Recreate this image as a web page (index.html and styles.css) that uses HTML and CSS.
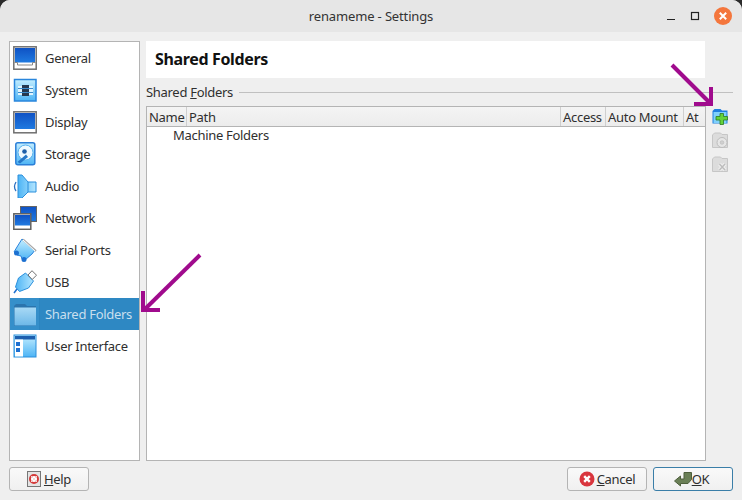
FILE: index.html
```html
<!doctype html>
<html>
<head>
    <meta charset="utf-8">
    <title>renameme - Settings</title>
    <link rel="stylesheet" href="styles.css">
</head>
<body>
<div class="window">
    <svg class="defs" width="0" height="0">
        <defs>
            <linearGradient id="screen" x1="0" y1="0" x2="0" y2="1"><stop offset="0" stop-color="#0f52c4"/><stop offset="1" stop-color="#1f7ae0"/></linearGradient>
            <linearGradient id="sky" x1="0" y1="0" x2="0" y2="1"><stop offset="0" stop-color="#c4eeff"/><stop offset="1" stop-color="#4db4f5"/></linearGradient>
            <linearGradient id="skyside" x1="0" y1="0" x2="1" y2="0"><stop offset="0" stop-color="#4db4f5"/><stop offset="1" stop-color="#b4e6ff"/></linearGradient>
            <linearGradient id="folder" x1="0" y1="0" x2="0" y2="1"><stop offset="0" stop-color="#a8d9f5"/><stop offset="1" stop-color="#6db8e8"/></linearGradient>
        </defs>
    </svg>
    <div class="titlebar">
        <span class="title">renameme - Settings</span>
        <div class="winbtns">
            <svg class="winbtn" width="10" height="10" viewBox="0 0 10 10"><path d="M1 8.500h8" stroke="#222" stroke-width="1"/></svg>
            <svg class="winbtn" width="10" height="10" viewBox="0 0 10 10"><rect x="1.500" y="1.500" width="7" height="7" fill="none" stroke="#222" stroke-width="1.200"/></svg>
            <svg class="closebtn" width="18" height="18" viewBox="0 0 18 18"><circle cx="9" cy="9" r="9" fill="#f4763c"/><path d="M5.800 5.800l6.400 6.400M12.200 5.800l-6.400 6.400" stroke="#fff" stroke-width="2"/></svg>
        </div>
    </div>
    <div class="main">
        <ul class="sidebar">
            <li class="item">
                <svg class="ico" viewBox="0 0 24 24"><rect x=".8" y=".8" width="22.400" height="22.400" fill="#fff" stroke="#707070" stroke-width="1.500"/><rect x="2" y="2" width="20" height="14.500" fill="url(#screen)"/><path d="M1.500 16.500h3v2.500h15v-2.500h3" fill="none" stroke="#888"/></svg>
                <span>General</span>
            </li>
            <li class="item">
                <svg class="ico" viewBox="0 0 24 24"><rect x="1.500" y="1.500" width="21.500" height="21.500" fill="url(#sky)" stroke="#2a86dc" stroke-width="1.500"/><rect x="5" y="8" width="15" height="9" fill="#dff4ff"/><rect x="9" y="7" width="7" height="11" fill="#26384f"/><path d="M5 10.500h15M5 14.500h15" stroke="#3c8ccc"/></svg>
                <span>System</span>
            </li>
            <li class="item">
                <svg class="ico" viewBox="0 0 24 24"><rect x=".8" y="1.800" width="22.400" height="21" fill="#fff" stroke="#707070" stroke-width="1.500"/><rect x="2" y="3" width="20" height="16" fill="url(#screen)"/></svg>
                <span>Display</span>
            </li>
            <li class="item">
                <svg class="ico" viewBox="0 0 24 24"><rect x="2.800" y=".8" width="19" height="22" rx="2" fill="url(#sky)" stroke="#2a7fd8" stroke-width="1.500"/><circle cx="12.500" cy="10.500" r="7.500" fill="#eef9ff" stroke="#55b0ee"/><circle cx="11.500" cy="9.500" r="2.300" fill="#1d5ea8"/><path d="M4.500 20l8.500-7.500 2 2.500-8 6.500z" fill="#2577c8"/></svg>
                <span>Storage</span>
            </li>
            <li class="item">
                <svg class="ico" viewBox="0 0 24 24"><path d="M5 1h4l6 7h8v10h-8l-6 6H5z" fill="url(#skyside)" stroke="#2a8fdc"/><path d="M15 8v10" stroke="#2a8fdc"/><path d="M3 8q-3 5 0 9" fill="none" stroke="#2a6fc0" stroke-width="1.300"/></svg>
                <span>Audio</span>
            </li>
            <li class="item">
                <svg class="ico" viewBox="0 0 24 24"><rect x="7.500" y=".5" width="16" height="15" fill="url(#screen)" stroke="#666"/><rect x=".8" y="7.800" width="17" height="15.500" fill="#fff" stroke="#606060" stroke-width="1.500"/><rect x="2" y="9" width="15" height="10.500" fill="url(#screen)"/></svg>
                <span>Network</span>
            </li>
            <li class="item">
                <svg class="ico" viewBox="0 0 24 24"><path d="M9 1l13 11-3 4-7 6-3-1-1-3-4-1-3-3 3-5z" fill="url(#sky)" stroke="#2a82dc"/><path d="M10 1.500l13 11.500" stroke="#a8a8a8" stroke-width="2"/><path d="M10 2l12 11" stroke="#fff"/><circle cx="3.500" cy="15" r="2.500" fill="#1d70d0"/><circle cx="11" cy="21.500" r="2.500" fill="#1d70d0"/></svg>
                <span>Serial Ports</span>
            </li>
            <li class="item">
                <svg class="ico" viewBox="0 0 24 24"><path d="M2.500 17l3-9 7-5 8 8-5 7-9 3.500z" fill="url(#skyside)" stroke="#2a8fdc"/><path d="M15 5l4-4.300 4.500 4.500-4.300 4.300z" fill="#fff" stroke="#707070"/><path d="M4 19l-3 4" stroke="#1d70d0" stroke-width="1.500"/></svg>
                <span>USB</span>
            </li>
            <li class="item current">
                <svg class="ico" viewBox="0 0 24 24"><path d="M1 4l2-2h9l2 2h9v21H1z" fill="#2b74ad"/><rect x="1.500" y="5.500" width="21.500" height="18" fill="url(#folder)"/></svg>
                <span>Shared Folders</span>
            </li>
            <li class="item">
                <svg class="ico" viewBox="0 0 24 24"><rect x="1" y="1" width="22" height="22" fill="url(#sky)" stroke="#2a8fdc"/><rect x="2" y="2" width="20" height="3.500" fill="#1d5fae"/><rect x="2" y="5.500" width="8" height="17" fill="#fff"/><rect x="3" y="8" width="4" height="4" fill="#1d70d0"/><rect x="3" y="14" width="4" height="4" fill="#1d70d0"/></svg>
                <span>User Interface</span>
            </li>
        </ul>
        <div class="content">
            <h1 class="pagehead">Shared Folders</h1>
            <div class="grouphead"><span>Shared <u>F</u>olders</span><i></i></div>
            <div class="tablerow">
                <div class="table">
                    <div class="thead">
                        <div class="th name">Name</div>
                        <div class="th path">Path</div>
                        <div class="th access">Access</div>
                        <div class="th mount">Auto Mount</div>
                        <div class="th at">At</div>
                    </div>
                    <div class="tr">Machine Folders</div>
                </div>
                <div class="tools">
                    <svg class="tool" viewBox="0 0 16 17"><path d="M.5 3l2-2h6l1.500 1.500h5.500v13H.5z" fill="#1f7fe0"/><rect x="1.500" y="4" width="13" height="11" fill="#7fd0fb"/><path d="M8 5.500h3.500v3h4v3.500h-4v4.500H8V12H4V8.500h4z" fill="#63d33a" stroke="#2c7a20" stroke-width=".8"/></svg>
                    <svg class="tool" viewBox="0 0 16 17"><path d="M.5 3l2-2h6l1.500 1.500h5.500v13H.5z" fill="#dcdcdc" stroke="#c6c6c6"/><circle cx="10" cy="10.500" r="5" fill="#e6e6e6" stroke="#bcbcbc"/><circle cx="10" cy="10.500" r="1.800" fill="#d0d0d0" stroke="#b8b8b8" stroke-width=".6"/></svg>
                    <svg class="tool" viewBox="0 0 16 17"><path d="M.5 3l2-2h6l1.500 1.500h5.500v13H.5z" fill="#dcdcdc" stroke="#c6c6c6"/><path d="M7.500 8l5.500 6M13 8l-5.500 6" stroke="#eee" stroke-width="3.600"/><path d="M7.500 8l5.500 6M13 8l-5.500 6" stroke="#bcbcbc" stroke-width="1.400"/></svg>
                </div>
            </div>
        </div>
    </div>
    <div class="footer">
        <button class="btn">
            <svg class="btnico helpico" viewBox="0 0 14 16"><rect x=".5" y=".5" width="13" height="15" fill="#e4e4e4" stroke="#777"/><circle cx="7" cy="8" r="4" fill="#fff" stroke="#d43a3a" stroke-width="2"/><path d="M4 5l6 6M10 5l-6 6" stroke="#f4dada"/></svg>
            <span><u>H</u>elp</span>
        </button>
        <div class="spacer"></div>
        <button class="btn">
            <svg class="btnico" viewBox="0 0 16 16"><circle cx="8" cy="8" r="7.500" fill="#d9363e"/><path d="M5.200 5.200l5.600 5.600M10.800 5.200l-5.600 5.600" stroke="#fff" stroke-width="2.400"/></svg>
            <span><u>C</u>ancel</span>
        </button>
        <button class="btn default">
            <svg class="okico" viewBox="0 0 18 16"><path d="M.5 10l6-5v3h3.500V1.500h7.500v7l-3.500 4H6.500V15z" fill="#6a7f56" stroke="#4e5f3d"/></svg>
            <span><u>O</u>K</span>
        </button>
    </div>
    <svg class="arrows" width="742" height="500" viewBox="0 0 742 500">
        <g fill="none" stroke="#a00b8d" stroke-width="4">
            <path d="M200 255L144 310"/>
            <path d="M143 291v19h17"/>
            <path d="M672 65L711 104"/>
            <path d="M711 87v17h-17"/>
        </g>
    </svg>
</div>
</body>
</html>
```
FILE: styles.css
```css
*{margin:0;padding:0;box-sizing:border-box;}
html,body{width:742px;height:500px;overflow:hidden;}
body{font-family:"Noto Sans","Open Sans",sans-serif;font-size:13px;letter-spacing:-0.3px;color:#2f2f2f;background:#2b2b2b;}
.defs{position:absolute;}
.window{
    position:relative;
    width:742px;
    height:500px;
    background:#efefef;
    border-radius:10px 10px 0 0;
    overflow:hidden;
    display:flex;
    flex-direction:column;
}
.titlebar{
    height:32px;
    flex:none;
    background:#e6e6e6;
    display:flex;
    align-items:center;
    justify-content:center;
    position:relative;
}
.title{font-size:13px;letter-spacing:-0.15px;color:#333;}
.winbtns{
    position:absolute;
    top:7px;
    right:10px;
    display:flex;
    align-items:center;
    gap:14px;
}
.main{
    flex:1;
    min-height:0;
    display:flex;
    gap:6px;
    padding:9px 0 0 9px;
}
.sidebar{
    width:131px;
    height:420px;
    background:#fff;
    border:1px solid #b4b4b4;
    list-style:none;
    flex:none;
}
.item{
    height:32px;
    display:flex;
    align-items:center;
    gap:8px;
    padding-left:3px;
    color:#2f2f2f;
    white-space:nowrap;
}
.item.current{background:linear-gradient(to right,#358fca 0,#358fca 29px,#2a82bd 29px,#2e88c3 30px);color:#c8dfee;}
.ico{width:24px;height:24px;flex:none;}
.content{
    width:587px;
    display:flex;
    flex-direction:column;
}
.pagehead{
    width:559px;
    height:37px;
    background:#fff;
    font-size:16px;
    letter-spacing:-0.35px;
    font-weight:bold;
    color:#111;
    line-height:36px;
    padding-left:9px;
}
.grouphead{
    height:28px;
    display:flex;
    align-items:center;
    gap:6px;
}
.grouphead i{flex:1;height:1px;background:#c0c0c0;}
.tablerow{display:flex;gap:6px;height:355px;}
.table{
    width:560px;
    background:#fff;
    border:1px solid #b4b4b4;
    flex:none;
}
.thead{
    height:20px;
    display:flex;
    background:linear-gradient(#f4f4f4,#ececec);
    border-bottom:1px solid #b4b4b4;
}
.th{
    padding-left:2px;
    line-height:20px;
    border-right:1px solid #cfcfcf;
    flex:none;
}
.name{width:40px;}
.path{width:374px;}
.access{width:45px;}
.mount{width:78px;}
.at{width:21px;border-right:0;}
.tr{height:17px;line-height:17px;padding-left:26px;}
.tools{display:flex;flex-direction:column;gap:7px;padding-top:2px;}
.tool{width:16px;height:17px;}
.footer{
    height:39px;
    flex:none;
    display:flex;
    align-items:flex-start;
    gap:6px;
    padding:6px 9px 0;
}
.spacer{flex:1;}
.btn{
    width:80px;
    height:24px;
    background:linear-gradient(#f9f9f9,#f0f0f0);
    border:1px solid #b4b4b4;
    border-radius:3px;
    font:inherit;
    letter-spacing:-0.3px;
    color:#2f2f2f;
    display:flex;
    align-items:center;
    justify-content:center;
    gap:2px;
}
.btn.default{border-color:#3a7ea8;gap:0;padding-right:3px;}
.btnico{width:16px;height:16px;}
.helpico{width:14px;margin-right:1px;}
.okico{width:18px;height:16px;}
.arrows{position:absolute;left:0;top:0;pointer-events:none;}
```
